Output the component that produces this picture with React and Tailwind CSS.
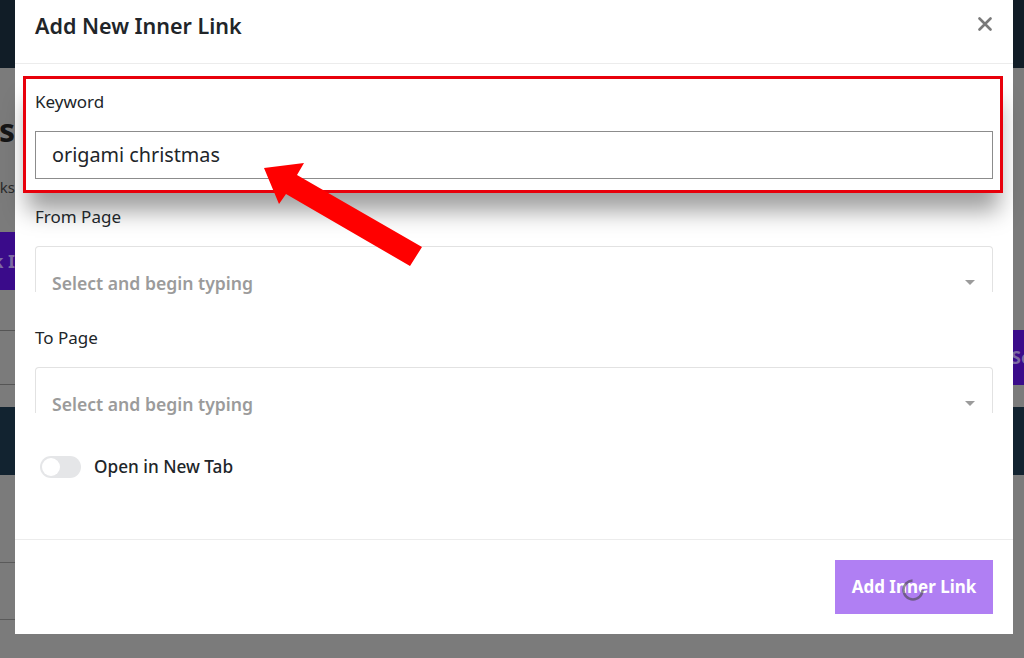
import React from "react";

// Dimmed page behind the dialog: only the left and right strips show
function BackgroundPage() {
  return (
    <div className="flex h-[658px] w-[1024px] flex-col bg-[#7b7b7b]">
      <div className="h-[68px] shrink-0 bg-[#111d27]" />
      <div className="flex flex-1">
        <div className="flex w-[15px] flex-col overflow-hidden">
          <div className="mt-[42px] flex justify-end whitespace-nowrap text-[32px] font-bold leading-[40px] text-[#161616]">
            Inner Links
          </div>
          <div className="mt-[27px] flex justify-end whitespace-nowrap text-[15px] leading-[20px] text-[#2a2a2a]">
            Manage inner links
          </div>
          <div className="mt-[35px] flex h-[58px] items-center justify-end whitespace-nowrap bg-[#3a0b8a] text-[18px] font-bold text-[#7d6aa3]">
            Bulk I
          </div>
          <div className="mt-[40px] h-[55px] border-y border-[#555]" />
          <div className="mt-[22px] h-[68px] bg-[#122330]" />
          <div className="h-[88px] border-b border-[#5a5a5a]" />
          <div className="h-[57px] border-b border-[#5a5a5a]" />
        </div>
        <div className="flex-1" />
        <div className="flex w-[11px] flex-col overflow-hidden">
          <div className="mt-[262px] flex h-[55px] items-center whitespace-nowrap bg-[#3a0b8a] text-[18px] font-bold text-[#7d6aa3]">
            <span className="-ml-[2px]">Search</span>
          </div>
          <div className="mt-[22px] h-[68px] bg-[#122330]" />
        </div>
      </div>
    </div>
  );
}

function SelectBox() {
  return (
    <div className="flex h-[46px] rounded-t-[4px] border-x border-t border-[#e2e2e2] pl-[16px] pr-[16px] pt-[24px]">
      <span className="flex-1 text-[17.6px] font-semibold leading-[24px] text-[#9b9b9b]">
        Select and begin typing
      </span>
      <svg width="10" height="5" viewBox="0 0 10 5" className="mr-[1px] mt-[9px]">
        <path d="M0 0 L10 0 L5 5 Z" fill="#9b9b9b" />
      </svg>
    </div>
  );
}

export default function App() {
  return (
    <div
      className="relative h-[658px] w-[1024px] overflow-hidden"
      style={{ fontFamily: '"Noto Sans", "Open Sans", sans-serif' }}
    >
      <BackgroundPage />

      {/* Modal */}
      <div className="absolute left-[15px] top-0 flex h-[634px] w-[998px] flex-col bg-white">
        <div className="flex h-[64px] shrink-0 items-start justify-between border-b border-[#ececec] px-5 pt-[11px]">
          <h2 className="text-[21.5px] font-semibold leading-[30px] text-[#212529]">Add New Inner Link</h2>
          <svg width="14" height="14" viewBox="0 0 14 14" className="mr-[1px] mt-[6px]">
            <path d="M1.5 1.5 L12.5 12.5 M12.5 1.5 L1.5 12.5" stroke="#7a7a7a" strokeWidth="2.6" strokeLinecap="round" />
          </svg>
        </div>

        <div className="flex flex-1 flex-col px-5 text-[#212529]">
          <div className="-ml-[12px] -mr-[10px] mt-[12px] border-[3px] border-[#e8000b] bg-white pb-[11px] pl-[9px] pr-[7px] pt-[11px] shadow-[0_22px_22px_-4px_rgba(0,0,0,0.38)]">
            <label className="block text-[17px] leading-[24px]">Keyword</label>
            <div className="mt-[17px] flex h-[48px] items-center border border-[#8c8c8c] pl-[16px] text-[19.8px]">
              origami christmas
            </div>
          </div>

          <label className="mt-[12px] block text-[17px] leading-[24px]">From Page</label>
          <div className="mt-[17px]">
            <SelectBox />
          </div>

          <label className="mt-[34px] block text-[17px] leading-[24px]">To Page</label>
          <div className="mt-[17px]">
            <SelectBox />
          </div>

          <div className="ml-[5px] mt-[42px] flex items-center gap-[13px]">
            <div className="flex h-[22px] w-[41px] items-center rounded-full bg-[#e5e6e8] px-[2px]">
              <div className="h-[18px] w-[18px] rounded-full bg-white" />
            </div>
            <span className="text-[17.2px] font-medium leading-[24px]">Open in New Tab</span>
          </div>
        </div>

        <div className="flex h-[95px] shrink-0 justify-end border-t border-[#ececec] pr-5 pt-[20px]">
          <button className="relative flex h-[54px] w-[158px] items-center justify-center bg-[#b07ff3] text-[17px] font-bold text-white">
            Add Inner Link
            <svg width="26" height="26" viewBox="0 0 26 26" className="absolute left-[65px] top-[17px]">
              <circle cx="13" cy="13" r="9.5" fill="none" stroke="rgba(70,70,70,0.6)" strokeWidth="2.5" strokeDasharray="44 16" />
            </svg>
          </button>
        </div>
      </div>

      {/* Red annotation arrow */}
      <svg className="pointer-events-none absolute left-0 top-0" width="1024" height="658">
        <polygon
          points="264,168 304,163 297,175 422,247 410,266 286,194 279,204"
          fill="#ff0000"
        />
      </svg>
    </div>
  );
}
